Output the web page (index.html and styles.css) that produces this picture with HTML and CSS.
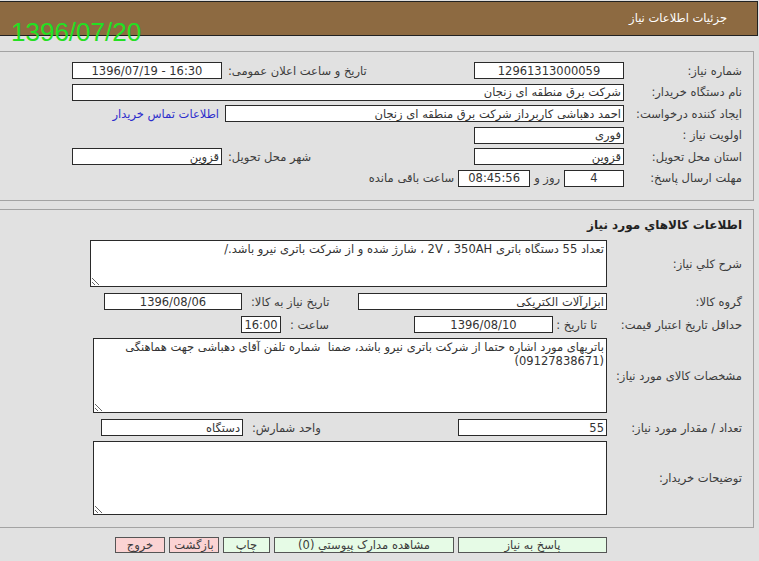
FILE: index.html
```html
<!DOCTYPE html>
<html lang="fa" dir="rtl">
<head>
    <meta charset="UTF-8">
    <title>جزئیات اطلاعات نیاز</title>
    <link rel="stylesheet" href="styles.css">
</head>
<body>
    <div class="page">
        <div class="titlebar">جزئیات اطلاعات نیاز</div>
        <div class="stamp" dir="ltr">1396/07/20</div>

        <!-- need header info -->
        <div class="panel panel-info">
            <div class="row">
                <span class="lbl">شماره نیاز:</span>
                <input class="fld w150 center" value="12961313000059" readonly>
                <div class="pair">
                    <span class="lbl2">تاریخ و ساعت اعلان عمومی:</span>
                    <input class="fld w150 center" dir="ltr" value="1396/07/19 - 16:30" readonly>
                </div>
            </div>
            <div class="row">
                <span class="lbl">نام دستگاه خریدار:</span>
                <input class="fld grow" value="شرکت برق منطقه ای زنجان" readonly>
            </div>
            <div class="row">
                <span class="lbl">ایجاد کننده درخواست:</span>
                <input class="fld w399" value="احمد دهباشی کاربرداز شرکت برق منطقه ای زنجان" readonly>
                <a href="#" class="contact">اطلاعات تماس خریدار</a>
            </div>
            <div class="row">
                <span class="lbl">اولویت نیاز :</span>
                <input class="fld w150" value="فوری" readonly>
            </div>
            <div class="row">
                <span class="lbl">استان محل تحویل:</span>
                <input class="fld w150" value="قزوین" readonly>
                <div class="pair">
                    <span class="lbl2">شهر محل تحویل:</span>
                    <input class="fld w150" value="قزوین" readonly>
                </div>
            </div>
            <div class="row">
                <span class="lbl">مهلت ارسال پاسخ:</span>
                <input class="fld w60 center" value="4" readonly>
                <span class="txt">روز و</span>
                <input class="fld w72 center" value="08:45:56" readonly>
                <span class="txt">ساعت باقی مانده</span>
            </div>
        </div>

        <!-- goods info -->
        <div class="panel panel-goods">
            <div class="panel-title">اطلاعات کالاهاي مورد نياز</div>
            <div class="row">
                <span class="lbl lbl-wide">شرح کلي نياز:</span>
                <textarea class="area w517 h47" readonly>تعداد 55 دستگاه باتری 2V ، 350AH ، شارژ شده و از شرکت باتری نیرو باشد./</textarea>
            </div>
            <div class="row gap6">
                <span class="lbl lbl-wide">گروه کالا:</span>
                <input class="fld w249" value="ابزارآلات الکتریکی" readonly>
                <span class="side w116">تاریخ نیاز به کالا:</span>
                <input class="fld w138 center" value="1396/08/06" readonly>
            </div>
            <div class="row gap6">
                <span class="lbl lbl-wide">حداقل تاريخ اعتبار قيمت:</span>
                <span class="until">تا تاریخ :</span>
                <input class="fld w139 center" value="1396/08/10" readonly>
                <span class="side w133">ساعت :</span>
                <input class="fld w40 center" value="16:00" readonly>
            </div>
            <div class="row gap5">
                <span class="lbl lbl-wide">مشخصات کالای مورد نیاز:</span>
                <textarea class="area w514 h75" readonly>باتریهای مورد اشاره حتما از شرکت باتری نیرو باشد، ضمنا  شماره تلفن آقای دهباشی جهت هماهنگی (09127838671)</textarea>
            </div>
            <div class="row gap6">
                <span class="lbl lbl-wide">تعداد / مقدار مورد نیاز:</span>
                <input class="fld w149" value="55" readonly>
                <span class="side w215">واحد شمارش:</span>
                <input class="fld w142" value="دستگاه" readonly>
            </div>
            <div class="row gap5">
                <span class="lbl lbl-wide">توضیحات خریدار:</span>
                <textarea class="area w514 h74" readonly></textarea>
            </div>
        </div>

        <div class="actions">
            <button class="btn btn-ok w149">پاسخ به نیاز</button>
            <button class="btn btn-ok w180">مشاهده مدارک پیوستي (0)</button>
            <button class="btn btn-ok w47">چاپ</button>
            <button class="btn btn-back w50">بازگشت</button>
            <button class="btn btn-back w50">خروج</button>
        </div>
    </div>
</body>
</html>
```

FILE: styles.css
```css
body {
    margin: 0;
    padding: 0;
    background-color: #e1e1e1;
    font-family: 'DejaVu Sans', sans-serif;
    font-size: 11.5px;
    color: #3c3c3c;
}

.page {
    position: relative;
    width: 759px;
    height: 561px;
    overflow: hidden;
}

.titlebar {
    height: 33px;
    line-height: 33px;
    margin: 1px 1px 0 -1px;
    padding-right: 30px;
    background-color: #8d6a41;
    border: 1px solid #222;
    color: #fff;
    font-size: 11.5px;
}

.stamp {
    position: absolute;
    left: 11px;
    top: 17px;
    font-family: 'Liberation Sans', Arial, sans-serif;
    font-size: 26px;
    color: #22e022;
}

.panel {
    border: 1px solid #a3a3a3;
    margin-right: 5px;
    margin-left: -1px;
}

.panel-info {
    margin-top: 15px;
    height: 138px;
    padding: 10px 11px 0 72px;
    display: flex;
    flex-direction: column;
    gap: 4.6px;
}

.panel-goods {
    margin-top: 8px;
    height: 311px;
    padding: 6px 11px 0 0;
}

.panel-title {
    height: 24px;
    line-height: 18px;
    font-weight: bold;
    font-size: 12px;
    color: #222;
}

.row {
    display: flex;
    align-items: center;
}

.gap5 { margin-top: 5px; }
.gap6 { margin-top: 6px; }

.lbl {
    width: 118px;
    flex-shrink: 0;
    white-space: nowrap;
}

.lbl-wide {
    width: 135px;
}

.pair {
    display: flex;
    align-items: center;
    margin-right: auto;
}

.lbl2 {
    margin-left: 6px;
}

.txt {
    margin: 0 4px;
}

.contact {
    margin-right: 6px;
    color: #2d2dcc;
    text-decoration: none;
}

.side {
    text-align: left;
    padding-left: 9px;
    box-sizing: border-box;
}

.until {
    width: 54px;
    padding-right: 10px;
    box-sizing: border-box;
    white-space: nowrap;
}

.fld {
    height: 17px;
    box-sizing: border-box;
    border: 1px solid #2a2a2a;
    background-color: #fff;
    padding: 0 2px;
    font-family: 'DejaVu Sans', sans-serif;
    font-size: 11.5px;
    color: #333;
    outline: none;
}

.center { text-align: center; }
.grow { flex: 1; }

.area {
    box-sizing: border-box;
    border: 1px solid #2a2a2a;
    background-color: #fff;
    padding: 1px 2px;
    font-family: 'DejaVu Sans', sans-serif;
    font-size: 11.5px;
    line-height: 14px;
    color: #333;
    overflow: hidden;
    margin: 0;
}

.w40 { width: 40px; }
.w47 { width: 47px; }
.w50 { width: 50px; }
.w60 { width: 60px; }
.w72 { width: 72px; }
.w116 { width: 116px; }
.w133 { width: 133px; }
.w138 { width: 138px; }
.w139 { width: 139px; }
.w142 { width: 142px; }
.w149 { width: 149px; }
.w150 { width: 150px; }
.w180 { width: 180px; }
.w215 { width: 215px; }
.w249 { width: 249px; }
.w399 { width: 399px; }
.w514 { width: 514px; }
.w517 { width: 517px; }
.h47 { height: 47px; }
.h74 { height: 74px; }
.h75 { height: 75px; }

.actions {
    display: flex;
    gap: 4px;
    margin-top: 9px;
    padding-right: 152px;
}

.btn {
    height: 16px;
    padding: 0;
    border: 1px solid #555;
    font-family: 'DejaVu Sans', sans-serif;
    font-size: 11.5px;
    color: #3c3c3c;
    cursor: pointer;
}

.btn-ok {
    background-color: #e6fbe6;
}

.btn-back {
    background-color: #fbd3d3;
}
```
